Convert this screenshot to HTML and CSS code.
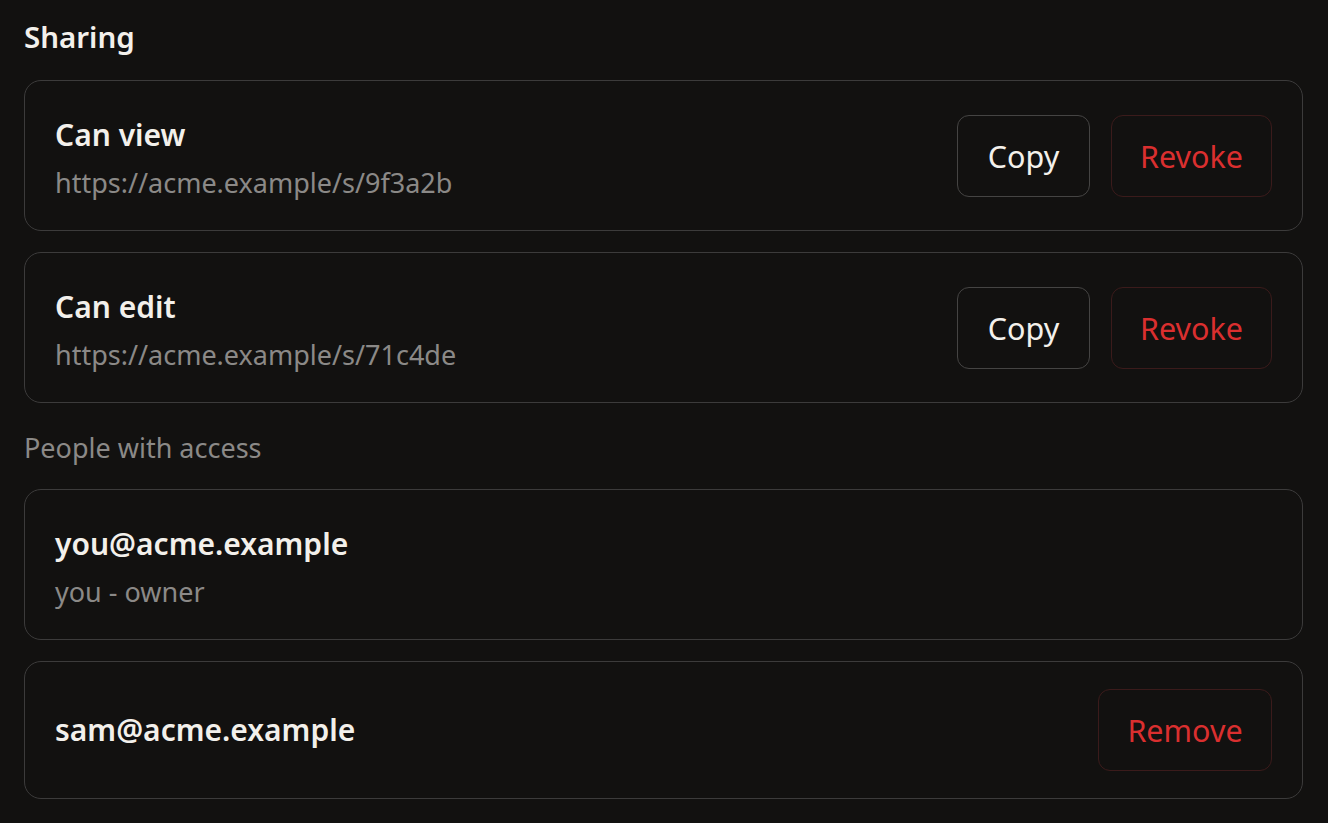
FILE: index.html
```html
<!DOCTYPE html>
<html lang="en">
<head>
<meta charset="utf-8">
<title>Sharing</title>
<link rel="stylesheet" href="styles.css">
</head>
<body>
<main class="page">
  <h2 class="heading">Sharing</h2>
  <div class="list">
    <div class="card">
      <div class="info">
        <div class="title">Can view</div>
        <div class="sub">https://acme.example/s/9f3a2b</div>
      </div>
      <div class="actions">
        <button class="btn">Copy</button>
        <button class="btn danger">Revoke</button>
      </div>
    </div>
    <div class="card">
      <div class="info">
        <div class="title">Can edit</div>
        <div class="sub">https://acme.example/s/71c4de</div>
      </div>
      <div class="actions">
        <button class="btn">Copy</button>
        <button class="btn danger">Revoke</button>
      </div>
    </div>
  </div>
  <div class="label">People with access</div>
  <div class="list">
    <div class="card">
      <div class="info">
        <div class="title">you@acme.example</div>
        <div class="sub">you - owner</div>
      </div>
    </div>
    <div class="card">
      <div class="info single">
        <div class="title">sam@acme.example</div>
      </div>
      <div class="actions">
        <button class="btn danger wide">Remove</button>
      </div>
    </div>
  </div>
</main>
</body>
</html>
```
FILE: styles.css
```css
html, body {
  margin: 0;
  background: #121110;
}
body {
  font-family: "Noto Sans", "Open Sans", sans-serif;
  color: #f3f0eb;
}
.page {
  padding: 17px 25px 0 24px;
}
.heading {
  margin: 0 0 23px 0;
  font-size: 29.5px;
  line-height: 40px;
  font-weight: 600;
}
.list {
  display: flex;
  flex-direction: column;
  gap: 21px;
}
.card {
  display: flex;
  align-items: center;
  justify-content: space-between;
  border: 1px solid #3c3b3b;
  border-radius: 17px;
  padding: 27px 30px 27px 30px;
}
.info {
  display: flex;
  flex-direction: column;
  padding-top: 7px;
}
.info.single {
  padding-top: 0;
}
.title {
  font-size: 30px;
  line-height: 40px;
  font-weight: 600;
}
.sub {
  margin-top: 8px;
  font-size: 27px;
  line-height: 40px;
  color: #8b8987;
}
.actions {
  display: flex;
  gap: 21px;
}
.btn {
  font-family: inherit;
  font-size: 30.5px;
  height: 82px;
  padding: 0 24px;
  border-radius: 12px;
  background: transparent;
  border: 1px solid #454443;
  color: #f3f0eb;
  min-width: 133px;
}
.btn.danger {
  color: #da2f2f;
  border-color: #3b1b1b;
  min-width: 161px;
}
.btn.wide {
  min-width: 174px;
}
.label {
  margin: 25px 0 21px 0;
  font-size: 27px;
  line-height: 40px;
  color: #8b8987;
}
```
